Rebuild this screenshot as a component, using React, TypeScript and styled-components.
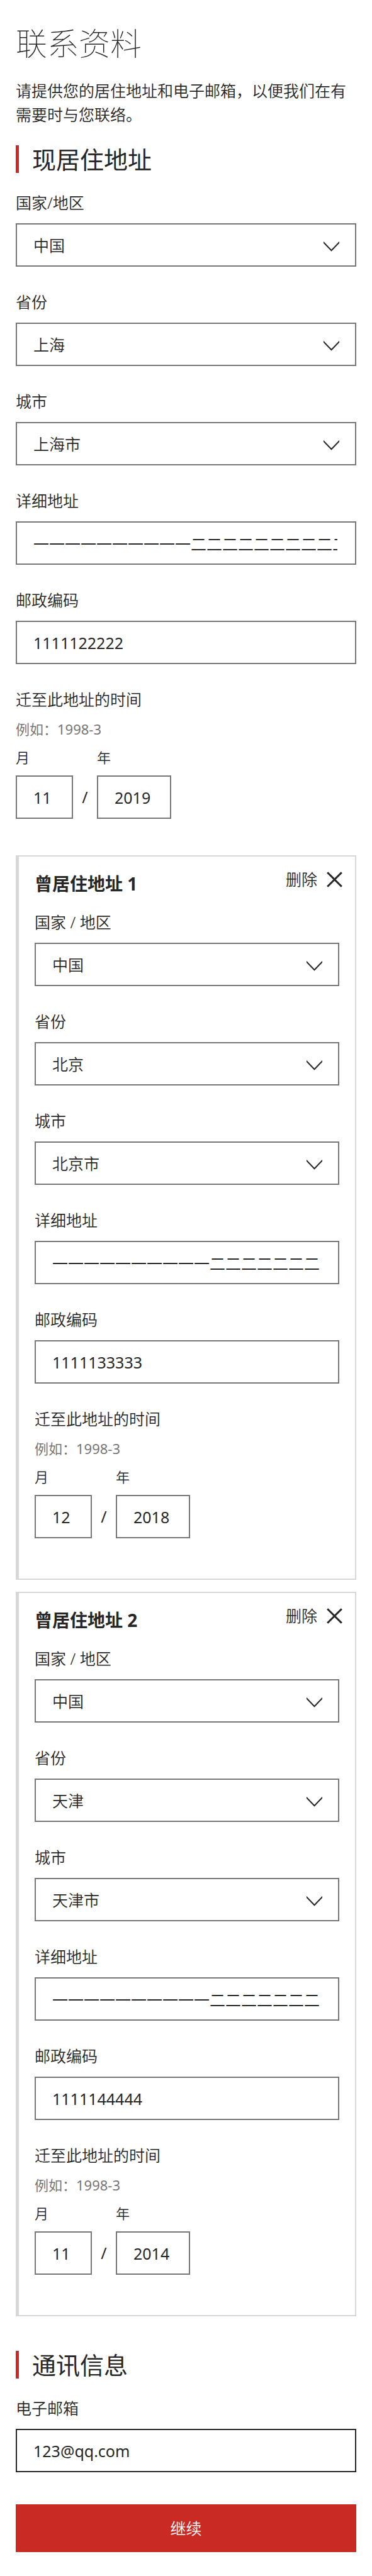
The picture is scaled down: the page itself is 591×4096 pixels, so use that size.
import React, { useId, useState } from "react";
import styled, { createGlobalStyle } from "styled-components";

const ink = "#262626";
const rule = "#767676";
const frame = "#d7d8d6";
const brand = "#c92a24";

const GlobalStyle = createGlobalStyle`
  *, *::before, *::after { box-sizing: border-box; }
  body {
    margin: 0;
    background: #fff;
    color: ${ink};
    font-family: "Noto Sans", "Noto Sans CJK SC", sans-serif;
    font-size: 25px;
    font-weight: 350;
    line-height: 38px;
  }
  input, select, button { font: inherit; color: inherit; }
`;

const Page = styled.main`
  padding: 38px 25px;
`;

const Title = styled.h1`
  margin: 0 0 25px;
  font-size: 50px;
  font-weight: 100;
  line-height: 62px;
`;

const Intro = styled.p`
  margin: 0 0 30px;
`;

const SectionTitle = styled.h2`
  margin: 0 0 28px;
  padding-left: 21px;
  border-left: 5px solid ${brand};
  font-size: 38px;
  font-weight: 400;
  line-height: 44px;
`;

const Fields = styled.div`
  display: flex;
  flex-direction: column;
  gap: 37px;
`;

const FieldBlock = styled.div`
  display: flex;
  flex-direction: column;
  gap: 14px;
`;

const Control = styled.input<{ $strong?: boolean }>`
  display: block;
  width: 100%;
  height: 69px;
  margin: 0;
  padding: 0 28px 0 26px;
  border: 2px solid ${(p) => (p.$strong ? ink : rule)};
  border-radius: 0;
  background: #fff;
  font-weight: 400;
  outline: 0;
`;

const SelectWrap = styled.div`
  position: relative;
`;

const SelectControl = styled(Control).attrs({ as: "select" })`
  appearance: none;
  padding-right: 60px;
  font-weight: 350;
`;

const Chevron = styled.svg`
  position: absolute;
  top: 29px;
  right: 27px;
  pointer-events: none;
`;

const DateGroup = styled.fieldset`
  min-width: 0;
  margin: 0;
  padding: 0;
  border: 0;
`;

const Legend = styled.legend`
  padding: 0;
`;

const Hint = styled.p`
  margin: 12px 0;
  color: ${rule};
  font-size: 22px;
  font-weight: 400;
  line-height: 33px;
`;

const DateRow = styled.div`
  display: flex;
  align-items: flex-end;
`;

const DatePart = styled.div<{ $width: number }>`
  display: flex;
  flex-direction: column;
  gap: 12px;
  width: ${(p) => p.$width}px;
  font-size: 22px;
  line-height: 33px;

  input { font-size: 25px; }
`;

const Slash = styled.span`
  width: 38px;
  font-weight: 400;
  line-height: 69px;
  text-align: center;
`;

const Card = styled.section`
  margin-top: 19px;
  padding: 22px 25px 64px;
  border: 2px solid ${frame};
  border-left-width: 5px;
`;

const Cards = styled.div`
  margin: 58px 0 55px;

  ${Card}:first-child { margin-top: 0; }
`;

const CardHeader = styled.header`
  display: flex;
  justify-content: space-between;
  align-items: flex-start;
  margin: 0 -5px 21px 0;
`;

const CardTitle = styled.h3`
  margin: 0;
  font-size: 28px;
  font-weight: 700;
  line-height: 42px;
`;

const RemoveButton = styled.button`
  display: flex;
  align-items: center;
  gap: 15px;
  height: 28px;
  padding: 0;
  border: 0;
  background: none;
  line-height: 28px;
  cursor: pointer;
`;

const Submit = styled.button`
  display: block;
  width: 100%;
  height: 76px;
  margin-top: 51px;
  border: 0;
  background: ${brand};
  && { color: #fff; }
  cursor: pointer;
`;

function SelectField({ label, value }: { label: string; value: string }) {
  const id = useId();
  return (
    <FieldBlock>
      <label htmlFor={id}>{label}</label>
      <SelectWrap>
        <SelectControl id={id} defaultValue={value}>
          <option value={value}>{value}</option>
        </SelectControl>
        <Chevron width="25" height="16" viewBox="0 0 25 16" fill="none" aria-hidden="true">
          <path d="M-1 .2 12.5 14.2 26 .2" stroke={ink} strokeWidth="2" />
        </Chevron>
      </SelectWrap>
    </FieldBlock>
  );
}

function TextField({ label, value, type = "text", strong }: {
  label: string;
  value: string;
  type?: string;
  strong?: boolean;
}) {
  const id = useId();
  return (
    <FieldBlock>
      <label htmlFor={id}>{label}</label>
      <Control id={id} type={type} defaultValue={value} $strong={strong} />
    </FieldBlock>
  );
}

function DateField({ month, year }: { month: string; year: string }) {
  const id = useId();
  return (
    <DateGroup>
      <Legend>迁至此地址的时间</Legend>
      <Hint>例如：1998-3</Hint>
      <DateRow>
        <DatePart $width={91}>
          <label htmlFor={id + "m"}>月</label>
          <Control id={id + "m"} defaultValue={month} />
        </DatePart>
        <Slash>/</Slash>
        <DatePart $width={118}>
          <label htmlFor={id + "y"}>年</label>
          <Control id={id + "y"} defaultValue={year} />
        </DatePart>
      </DateRow>
    </DateGroup>
  );
}

interface Address {
  province: string;
  city: string;
  postcode: string;
  month: string;
  year: string;
}

const street = "一".repeat(10) + "二".repeat(10);

function AddressFields({ address, countryLabel }: { address: Address; countryLabel: string }) {
  return (
    <Fields>
      <SelectField label={countryLabel} value="中国" />
      <SelectField label="省份" value={address.province} />
      <SelectField label="城市" value={address.city} />
      <TextField label="详细地址" value={street} />
      <TextField label="邮政编码" value={address.postcode} />
      <DateField month={address.month} year={address.year} />
    </Fields>
  );
}

const current: Address = { province: "上海", city: "上海市", postcode: "1111122222", month: "11", year: "2019" };

const initialPrevious: Address[] = [
  { province: "北京", city: "北京市", postcode: "1111133333", month: "12", year: "2018" },
  { province: "天津", city: "天津市", postcode: "1111144444", month: "11", year: "2014" },
];

export default function App() {
  const [previous, setPrevious] = useState(initialPrevious);
  return (
    <>
      <GlobalStyle />
      <Page>
        <Title>联系资料</Title>
        <Intro>请提供您的居住地址和电子邮箱，以便我们在有需要时与您联络。</Intro>
        <SectionTitle>现居住地址</SectionTitle>
        <AddressFields address={current} countryLabel="国家/地区" />
        <Cards>
          {previous.map((address, i) => (
            <Card key={address.postcode}>
              <CardHeader>
                <CardTitle>曾居住地址 {i + 1}</CardTitle>
                <RemoveButton type="button" onClick={() => setPrevious(previous.filter((a) => a !== address))}>
                  删除
                  <svg width="25" height="25" viewBox="0 0 25 25" fill="none" aria-hidden="true">
                    <path d="M1.2 1.2 23.8 23.8M23.8 1.2 1.2 23.8" stroke={ink} strokeWidth="3" />
                  </svg>
                </RemoveButton>
              </CardHeader>
              <AddressFields address={address} countryLabel="国家 / 地区" />
            </Card>
          ))}
        </Cards>
        <SectionTitle>通讯信息</SectionTitle>
        <TextField label="电子邮箱" type="email" value="123@qq.com" strong />
        <Submit type="button">继续</Submit>
      </Page>
    </>
  );
}
